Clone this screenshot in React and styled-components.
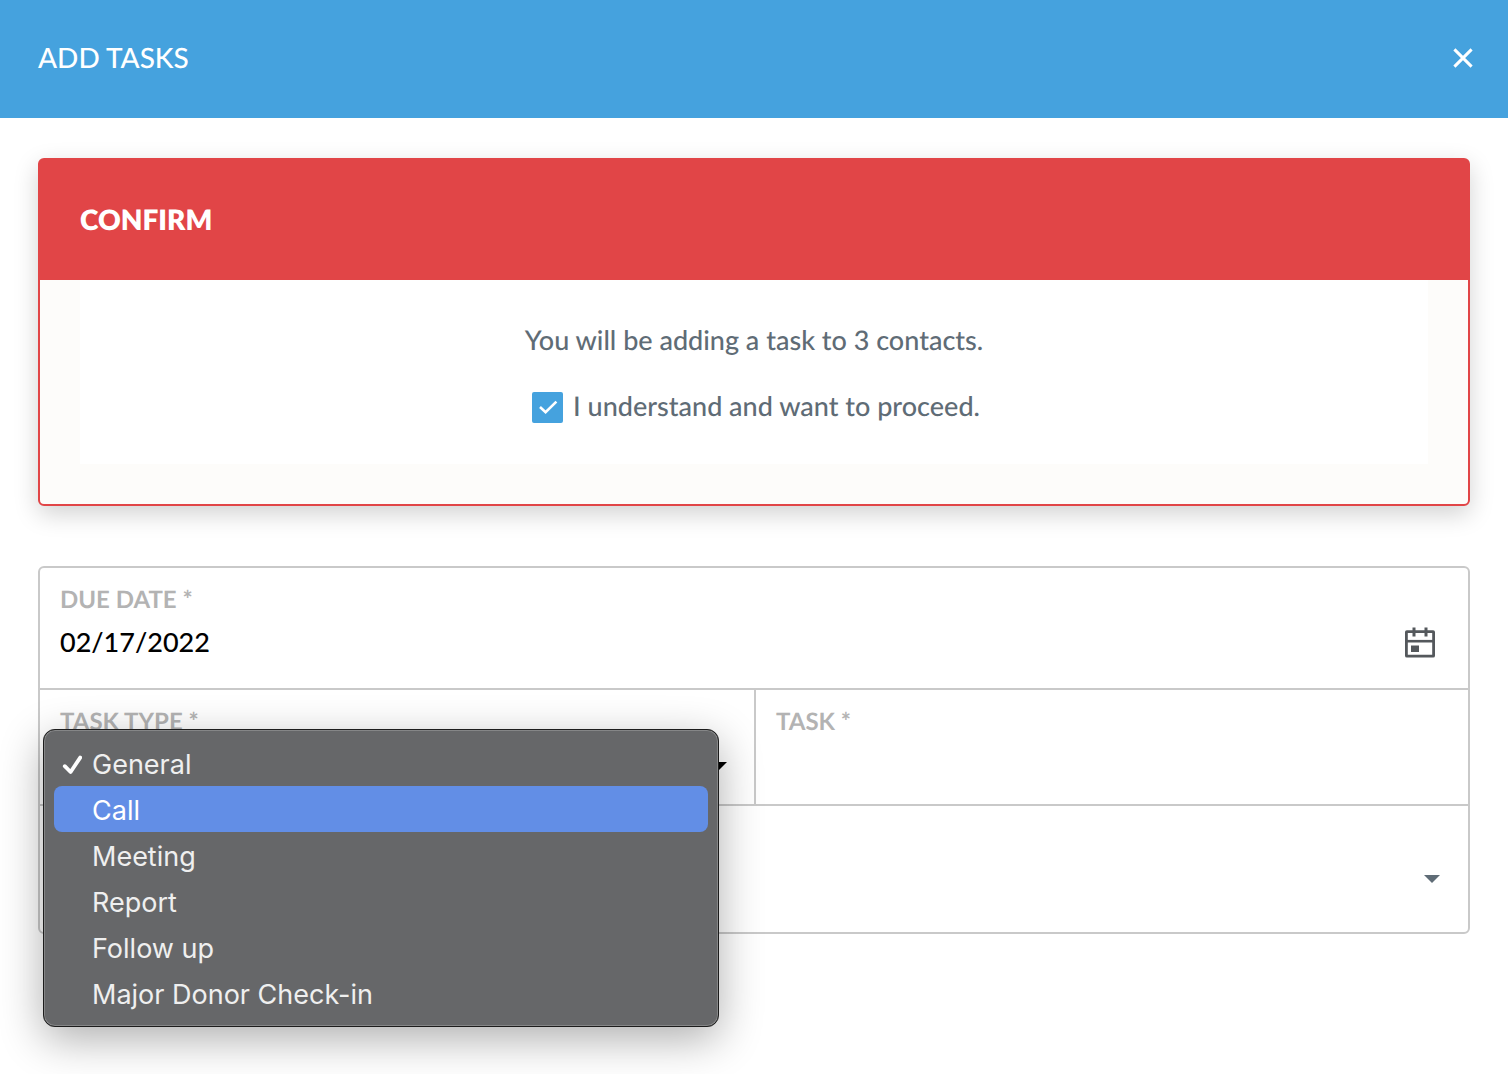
import React, { useState } from "react";
import styled, { createGlobalStyle } from "styled-components";

const GlobalStyle = createGlobalStyle`
  * {
    box-sizing: border-box;
  }

  body {
    margin: 0;
    background: #fff;
    color: #5f6c76;
    font-family: Lato, "Liberation Sans", sans-serif;
    font-size: 27px;
    font-weight: 500;
    line-height: 36px;
    text-rendering: geometricPrecision;
  }

  button, input, select {
    margin: 0;
    font: inherit;
  }
`;

const Page = styled.div`
  min-height: 100vh;
`;

const Header = styled.header`
  display: flex;
  align-items: center;
  justify-content: space-between;
  padding: 39px 34px 43px 38px;
  background: #45a2de;
  color: #fff;

  h1 {
    margin: 0;
    font-size: 28px;
    font-weight: 500;
  }
`;

const CloseButton = styled.button`
  display: flex;
  padding: 2px 0 0;
  border: 0;
  background: none;
  color: inherit;
  cursor: pointer;
`;

const Content = styled.main`
  display: flex;
  flex-direction: column;
  gap: 60px;
  padding: 40px 38px;
`;

const ConfirmCard = styled.section`
  border: 2px solid #e14547;
  border-radius: 6px;
  background: #fdfcfa;
  box-shadow: 0 8px 24px rgba(0, 0, 0, 0.18);

  h2 {
    margin: 0;
    padding: 41px 40px 43px;
    background: #e14547;
    color: #fff;
    font-size: 28px;
    font-weight: 800;
  }
`;

const ConfirmBody = styled.div`
  display: flex;
  flex-direction: column;
  align-items: center;
  gap: 30px;
  margin: 0 40px 40px;
  padding: 42px 0 40px;
  background: #fff;

  p {
    margin: 0;
  }
`;

const CheckLabel = styled.label`
  display: flex;
  align-items: center;
  gap: 10px;
  padding-left: 4px;
  cursor: pointer;
`;

const CheckBox = styled.span`
  display: grid;
  margin-top: 2px;

  input,
  svg {
    grid-area: 1 / 1;
    width: 31px;
    height: 31px;
  }

  input {
    appearance: none;
    border: 2px solid #45a2de;
    border-radius: 2px;
  }

  input:checked {
    background: #45a2de;
  }

  svg {
    pointer-events: none;
  }
`;

const Form = styled.form`
  display: grid;
  grid-template-columns: 50% 1fr;
  gap: 2px;
  border: 2px solid #c9c9c9;
  border-radius: 6px;
  background: #c9c9c9;
`;

const Field = styled.div`
  position: relative;
  grid-column: ${({ $wide }) => ($wide ? "1 / -1" : "auto")};
  min-height: ${({ $height }) => $height};
  padding: 14px 20px;
  border-radius: ${({ $corners }) => $corners || "0"};
  background: #fff;

  > label {
    display: block;
    color: #b3b3b3;
    font-size: 24px;
    font-weight: 700;
    line-height: 36px;
  }
`;

const FieldRow = styled.div`
  display: flex;
  align-items: center;
  justify-content: space-between;
  padding-top: ${({ $top }) => $top || "6px"};
  padding-right: ${({ $right }) => $right || "0"};
`;

const TextInput = styled.input`
  flex: 1;
  min-width: 0;
  width: 100%;
  height: 36px;
  padding: 0;
  border: 0;
  outline: 0;
  background: none;
  color: #000;
`;

const Select = styled.select`
  flex: 1;
  min-width: 0;
  height: 36px;
  padding: 0;
  border: 0;
  outline: 0;
  appearance: none;
  background: none;
  color: #000;
`;

const IconButton = styled.button`
  display: flex;
  padding: 0;
  border: 0;
  background: none;
  color: #54585c;
  cursor: pointer;
`;

const Menu = styled.ul`
  position: absolute;
  z-index: 1;
  top: 39px;
  left: 3px;
  right: 35px;
  margin: 0;
  padding: 9px;
  border: 2px solid #858687;
  border-radius: 12px;
  outline: 1px solid #1c1c1c;
  outline-offset: -1px;
  background: #666769;
  box-shadow: 0 12px 44px rgba(0, 0, 0, 0.32);
  list-style: none;
`;

const MenuItem = styled.button`
  display: grid;
  grid-template-columns: 20px 1fr;
  gap: 10px;
  align-items: center;
  width: 100%;
  height: 46px;
  padding: 3px 8px 0;
  border: 0;
  border-radius: 8px;
  background: ${({ $active }) => ($active ? "#628ee6" : "none")};
  color: ${({ $active }) => ($active ? "#fff" : "#efefef")};
  font-family: Inter, "Liberation Sans", sans-serif;
  font-size: 27px;
  font-weight: 400;
  line-height: 36px;
  text-align: left;

  span {
    grid-column: 2;
  }
`;

const taskTypes = ["General", "Call", "Meeting", "Report", "Follow up", "Major Donor Check-in"];

function Caret({ color }) {
  return (
    <svg width="16" height="8" viewBox="0 0 16 8" aria-hidden="true">
      <path d="M0 0H16L8 8Z" fill={color} />
    </svg>
  );
}

function CalendarIcon() {
  return (
    <svg width="30" height="31" viewBox="0 0 30 31" fill="none" stroke="currentColor" aria-hidden="true">
      <rect x="1.4" y="4.6" width="27.2" height="24.6" rx="0.5" strokeWidth="2.8" />
      <path d="M1 14.2H29" strokeWidth="2.6" />
      <path d="M9 0.5V9.5M21 0.5V9.5" strokeWidth="3" />
      <path d="M6 18.5H14V25H6Z" fill="currentColor" stroke="none" />
    </svg>
  );
}

function TaskTypeMenu({ selected, onSelect }) {
  const [active, setActive] = useState("Call");

  return (
    <Menu>
      {taskTypes.map((type) => (
        <li key={type}>
          <MenuItem
            type="button"
            $active={type === active}
            onMouseEnter={() => setActive(type)}
            onClick={() => onSelect(type)}
          >
            {type === selected && (
              <svg width="20" height="20" viewBox="0 0 20 20" fill="none" aria-hidden="true">
                <path
                  d="M2.8 11.2L8.6 17L18.2 2.6"
                  stroke="#fff"
                  strokeWidth="3.8"
                  strokeLinecap="round"
                  strokeLinejoin="round"
                />
              </svg>
            )}
            <span>{type}</span>
          </MenuItem>
        </li>
      ))}
    </Menu>
  );
}

function App() {
  const [agreed, setAgreed] = useState(true);
  const [dueDate, setDueDate] = useState("02/17/2022");
  const [taskType, setTaskType] = useState("General");

  return (
    <Page>
      <GlobalStyle />
      <Header>
        <h1>ADD TASKS</h1>
        <CloseButton type="button" aria-label="Close">
          <svg width="22" height="22" viewBox="0 0 22 22" aria-hidden="true">
            <path d="M2.4 2.4L19.6 19.6M19.6 2.4L2.4 19.6" stroke="#fff" strokeWidth="3" />
          </svg>
        </CloseButton>
      </Header>
      <Content>
        <ConfirmCard>
          <h2>CONFIRM</h2>
          <ConfirmBody>
            <p>You will be adding a task to 3 contacts.</p>
            <CheckLabel>
              <CheckBox>
                <input type="checkbox" checked={agreed} onChange={(e) => setAgreed(e.target.checked)} />
                <svg viewBox="0 0 31 31" fill="none" aria-hidden="true">
                  <path d="M8 15L13.6 20.2L24.4 9.6" stroke="#fff" strokeWidth="2.6" />
                </svg>
              </CheckBox>
              I understand and want to proceed.
            </CheckLabel>
          </ConfirmBody>
        </ConfirmCard>

        <Form>
          <Field $wide $height="120px" $corners="4px 4px 0 0">
            <label htmlFor="due-date">DUE DATE *</label>
            <FieldRow $right="13px">
              <TextInput id="due-date" value={dueDate} onChange={(e) => setDueDate(e.target.value)} />
              <IconButton type="button" aria-label="Choose date">
                <CalendarIcon />
              </IconButton>
            </FieldRow>
          </Field>
          <Field $height="114px">
            <label htmlFor="task-type">TASK TYPE *</label>
            <FieldRow $top="8px" $right="7px">
              <Select id="task-type" value={taskType} onChange={(e) => setTaskType(e.target.value)}>
                {taskTypes.map((type) => (
                  <option key={type}>{type}</option>
                ))}
              </Select>
              <Caret color="#000" />
            </FieldRow>
            <TaskTypeMenu selected={taskType} onSelect={setTaskType} />
          </Field>
          <Field $height="114px">
            <label htmlFor="task">TASK *</label>
            <FieldRow>
              <TextInput id="task" />
            </FieldRow>
          </Field>
          <Field $wide $height="126px" $corners="0 0 4px 4px">
            <FieldRow $top="41px" $right="8px">
              <Select aria-label="Assignee">
                <option />
              </Select>
              <Caret color="#5f6c76" />
            </FieldRow>
          </Field>
        </Form>
      </Content>
    </Page>
  );
}

export default App;
